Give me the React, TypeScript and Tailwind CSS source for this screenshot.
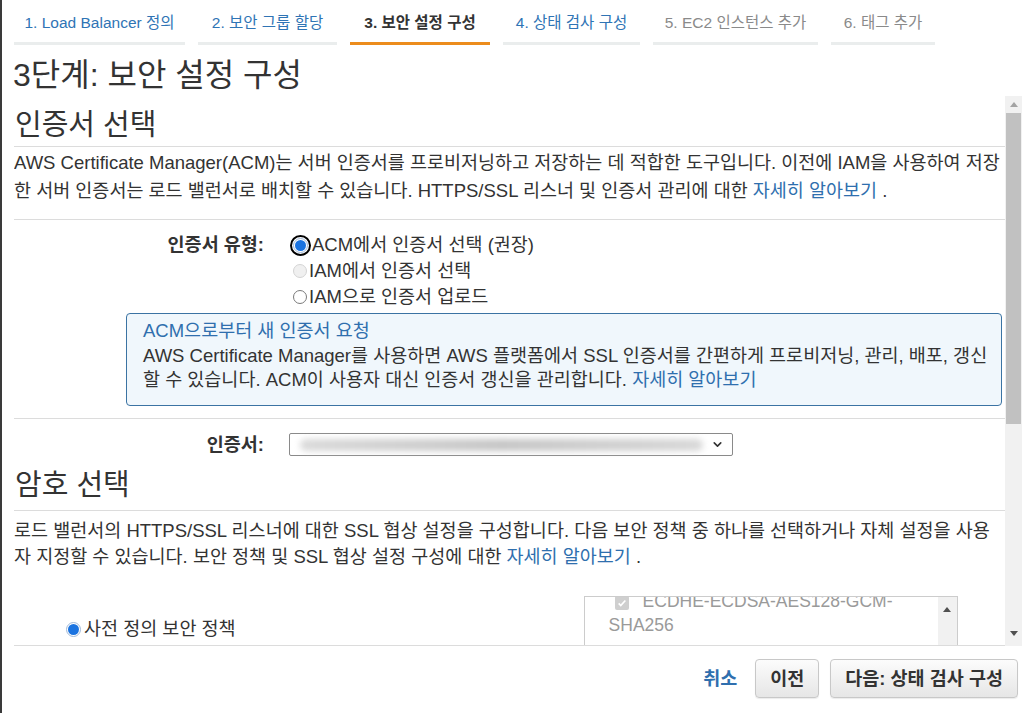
import { ChevronDown } from 'lucide-react';

const tabs = [
  { label: '1. Load Balancer 정의', width: 'w-[171px]', text: 'text-[#2f74b5]', bar: 'border-[#eaeded]' },
  { label: '2. 보안 그룹 할당', width: 'w-[139px]', text: 'text-[#2f74b5]', bar: 'border-[#eaeded]' },
  { label: '3. 보안 설정 구성', width: 'w-[140px]', text: 'text-[#333] font-bold', bar: 'border-[#ec8c1c]' },
  { label: '4. 상태 검사 구성', width: 'w-[137px]', text: 'text-[#2f74b5]', bar: 'border-[#eaeded]' },
  { label: '5. EC2 인스턴스 추가', width: 'w-[165px]', text: 'text-[#8a8a8a]', bar: 'border-[#eaeded]' },
  { label: '6. 태그 추가', width: 'w-[104px]', text: 'text-[#8a8a8a]', bar: 'border-[#eaeded]' },
];

type RadioState = 'focus' | 'on' | 'off' | 'disabled';

function Radio({ state }: { state: RadioState }) {
  if (state === 'disabled') {
    return <span className="inline-block w-[14px] h-[14px] rounded-full border border-[#d4d4d4] bg-[#f0f0f0] shrink-0" />;
  }
  if (state === 'off') {
    return <span className="inline-block w-[14px] h-[14px] rounded-full border border-[#7a7a7a] bg-white shrink-0" />;
  }
  return (
    <span
      className={`inline-flex items-center justify-center w-[15px] h-[15px] rounded-full border border-[#9fb8d8] bg-white shrink-0 ${
        state === 'focus' ? 'outline-2 outline-black outline-offset-[1px]' : ''
      }`}
    >
      <span className="w-[11px] h-[11px] rounded-full bg-[#1a73e0]" />
    </span>
  );
}

function Link({ children }: { children: React.ReactNode }) {
  return <span className="text-[#2f6fae]">{children}</span>;
}

export default function App() {
  return (
    <div className="w-[1033px] h-[713px] bg-white flex overflow-hidden font-['Liberation_Sans','Noto_Sans_CJK_KR',sans-serif] text-[#333]">
      {/* window edge */}
      <div className="w-[2px] bg-[#3a3a3a] shrink-0" />

      <div className="flex-1 flex flex-col">
        {/* Wizard steps */}
        <div className="flex gap-[13px] pl-[12px]">
          {tabs.map(t => (
            <div
              key={t.label}
              className={`${t.width} ${t.text} ${t.bar} border-b-[3px] pt-[13px] pb-[9px] text-center text-[15.5px] leading-[20px] whitespace-nowrap`}
            >
              {t.label}
            </div>
          ))}
        </div>

        <h1 className="mt-[12px] pl-[11px] text-[32px] leading-[36px] text-[#333]">3단계: 보안 설정 구성</h1>

        {/* Scrolling body */}
        <div className="mt-[3px] flex ml-[12px]">
          <div className="w-[991px] h-[550px] border-b border-[#dcdcdc] overflow-hidden text-[18.5px]">
            {/* 인증서 선택 */}
            <h2 className="pt-[12px] pb-[4px] pl-[1px] text-[29px] leading-[34px] border-b border-[#dcdcdc]">인증서 선택</h2>
            <div className="pt-[2px] pb-[14px] leading-[28px] border-b border-[#dcdcdc]">
              <div className="whitespace-nowrap">
                AWS Certificate Manager(ACM)는 서버 인증서를 프로비저닝하고 저장하는 데 적합한 도구입니다. 이전에 IAM을 사용하여 저장
              </div>
              <div className="whitespace-nowrap">
                한 서버 인증서는 로드 밸런서로 배치할 수 있습니다. HTTPS/SSL 리스너 및 인증서 관리에 대한 <Link>자세히 알아보기</Link> .
              </div>
            </div>

            <div className="pt-[12px] pb-[12px] border-b border-[#dcdcdc]">
              <div className="flex">
                <div className="w-[250px] text-right font-bold leading-[26px]">인증서 유형:</div>
                <div className="ml-[27px] flex flex-col leading-[26px]">
                  <div className="flex items-center">
                    <span className="ml-[2px] mr-[4px] flex"><Radio state="focus" /></span>ACM에서 인증서 선택 (권장)
                  </div>
                  <div className="flex items-center text-[#333]">
                    <span className="ml-[2px] mr-[2px] flex"><Radio state="disabled" /></span>IAM에서 인증서 선택
                  </div>
                  <div className="flex items-center">
                    <span className="ml-[2px] mr-[2px] flex"><Radio state="off" /></span>IAM으로 인증서 업로드
                  </div>
                </div>
              </div>

              <div className="mt-[3px] ml-[112px] mr-[3px] rounded-[4px] border border-[#3b73a3] bg-[#f0f7fc] pl-[16px] pt-[4px] pb-[13px]">
                <div className="leading-[26px] text-[#2f6fae]">ACM으로부터 새 인증서 요청</div>
                <div className="leading-[24px] whitespace-nowrap">
                  AWS Certificate Manager를 사용하면 AWS 플랫폼에서 SSL 인증서를 간편하게 프로비저닝, 관리, 배포, 갱신
                </div>
                <div className="leading-[24px] whitespace-nowrap">
                  할 수 있습니다. ACM이 사용자 대신 인증서 갱신을 관리합니다. <Link>자세히 알아보기</Link>
                </div>
              </div>
            </div>

            <div className="pt-[14px] flex items-center">
              <div className="w-[250px] text-right font-bold leading-[23px]">인증서:</div>
              <div className="ml-[25px] w-[444px] h-[23px] border border-[#8a8a8a] rounded-[2px] bg-white flex items-center pl-[10px] pr-[8px]">
                <div className="flex-1 h-[12px] rounded-full bg-gradient-to-r from-[#dadada] via-[#c6c6c6] to-[#d8d8d8] blur-[3px]" />
                <ChevronDown className="ml-[8px] w-[13px] h-[13px] text-[#333]" strokeWidth={3} />
              </div>
            </div>

            {/* 암호 선택 */}
            <h2 className="mt-[12px] pb-[8px] pl-[1px] text-[29px] leading-[34px] border-b border-[#dcdcdc]">암호 선택</h2>
            <div className="pt-[7px] leading-[26px]">
              <div className="whitespace-nowrap">
                로드 밸런서의 HTTPS/SSL 리스너에 대한 SSL 협상 설정을 구성합니다. 다음 보안 정책 중 하나를 선택하거나 자체 설정을 사용
              </div>
              <div className="whitespace-nowrap">
                자 지정할 수 있습니다. 보안 정책 및 SSL 협상 설정 구성에 대한 <Link>자세히 알아보기</Link> .
              </div>
            </div>

            <div className="mt-[26px] flex">
              <div className="pl-[52px] pt-[20px] flex items-start">
                <div className="flex items-center leading-[26px]">
                  <span className="mr-[3px] flex"><Radio state="on" /></span>사전 정의 보안 정책
                </div>
              </div>
              <div className="ml-[348px] w-[374px] h-[80px] border border-[#cccccc] flex overflow-hidden">
                <div className="flex-1 pl-[24px] pr-[10px] -mt-[8px] text-[#9a9a9a] text-[17.5px] leading-[24px]">
                  <span className="inline-flex items-center justify-center w-[14px] h-[14px] bg-[#cfcfcf] rounded-[2px] mr-[14px] ml-[6px] align-[-1px]">
                    <svg viewBox="0 0 12 12" className="w-[10px] h-[10px]" fill="none" stroke="#fff" strokeWidth="2">
                      <path d="M2 6.5l2.5 2.5L10 3" />
                    </svg>
                  </span>
                  ECDHE-ECDSA-AES128-GCM-
                  <br />
                  SHA256
                </div>
                <div className="w-[19px] bg-[#f1f1f1] flex justify-center pt-[10px]">
                  <svg viewBox="0 0 8 5" className="w-[8px] h-[5px]">
                    <path d="M0 5L4 0L8 5Z" fill="#505050" />
                  </svg>
                </div>
              </div>
            </div>
          </div>

          {/* page scrollbar */}
          <div className="w-[17px] h-[550px] bg-[#f1f1f1] flex flex-col">
            <div className="h-[17px] flex items-center justify-center">
              <svg viewBox="0 0 8 5" className="w-[8px] h-[5px]">
                <path d="M0 5L4 0L8 5Z" fill="#a3a3a3" />
              </svg>
            </div>
            <div className="mx-[1px] h-[311px] bg-[#c1c1c1]" />
            <div className="flex-1" />
            <div className="h-[26px] flex items-center justify-center">
              <svg viewBox="0 0 8 5" className="w-[8px] h-[5px]">
                <path d="M0 0L8 0L4 5Z" fill="#505050" />
              </svg>
            </div>
          </div>
        </div>

        {/* Footer actions */}
        <div className="flex items-center justify-end pr-[15px] pt-[13px] gap-[11px] text-[18.5px] font-bold">
          <span className="text-[#2f6fae] mr-[7px]">취소</span>
          <button className="h-[39px] px-[14px] rounded-[4px] border border-[#c8c8c8] bg-gradient-to-b from-[#fcfcfc] to-[#e6e6e6] text-[#333] shadow-[0_1px_1px_rgba(0,0,0,0.08)]">
            이전
          </button>
          <button className="h-[39px] px-[14px] rounded-[4px] border border-[#c8c8c8] bg-gradient-to-b from-[#fcfcfc] to-[#e6e6e6] text-[#333] shadow-[0_1px_1px_rgba(0,0,0,0.08)]">
            다음: 상태 검사 구성
          </button>
        </div>
      </div>
    </div>
  );
}
